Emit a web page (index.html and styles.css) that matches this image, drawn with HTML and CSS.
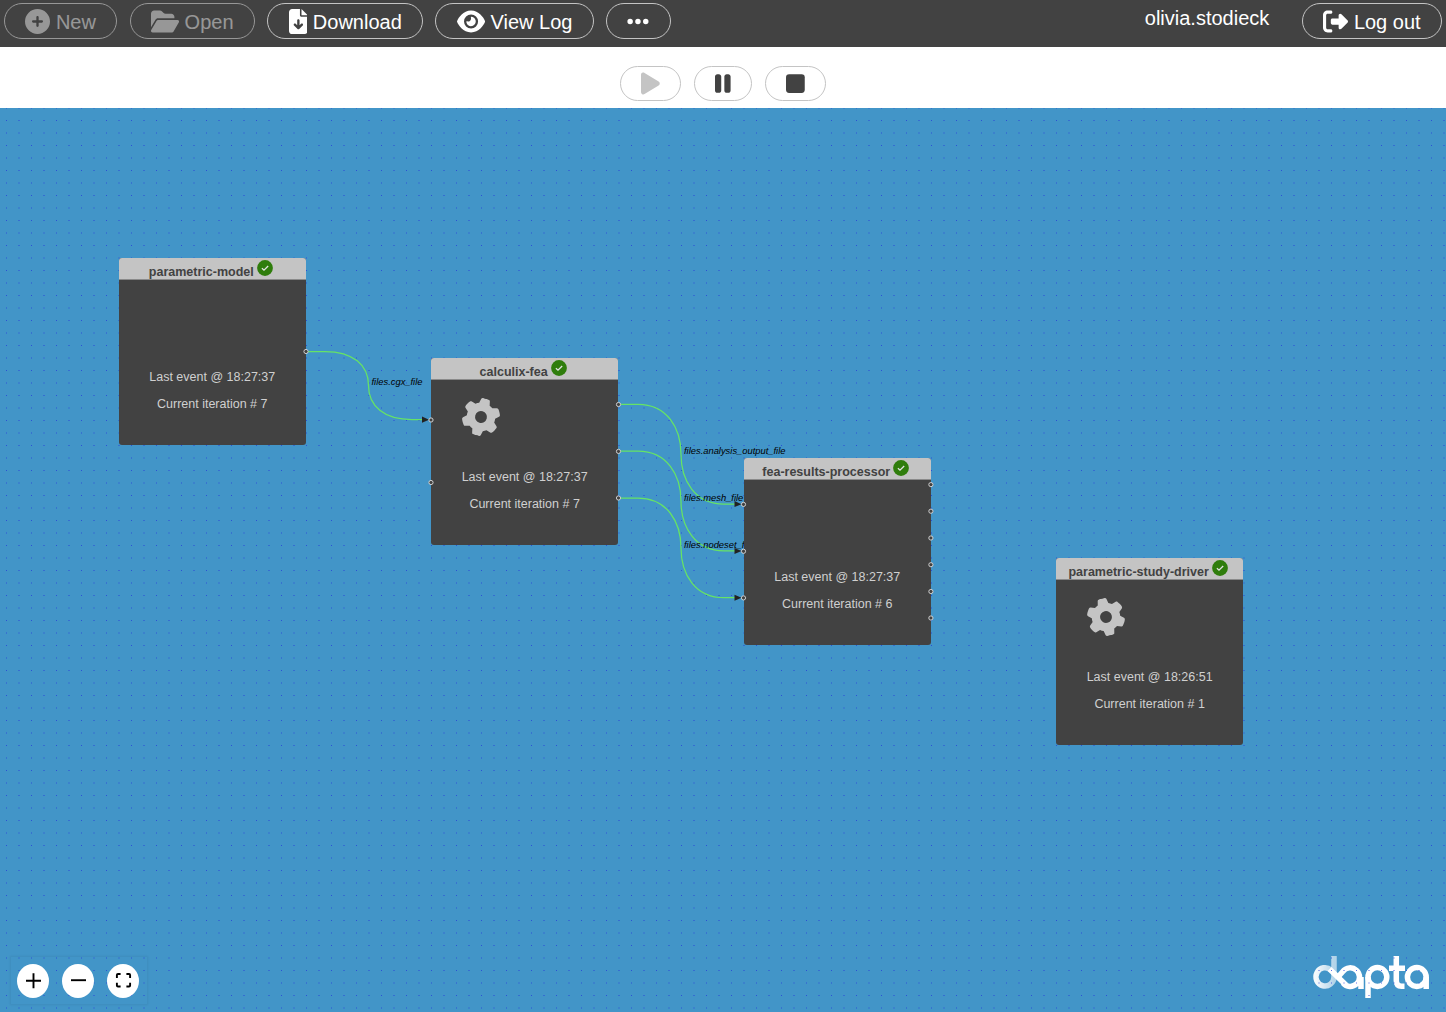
FILE: index.html
```html
<!DOCTYPE html>
<html lang="en">
<head>
<meta charset="utf-8">
<title>dapta</title>
<link rel="stylesheet" href="styles.css">
</head>
<body>
<svg class="defs" width="0" height="0" aria-hidden="true">
  <symbol id="gear" viewBox="0 0 512 512"><path d="M495.9 166.6c3.2 8.7 .5 18.4-6.4 24.6l-43.3 39.4c1.1 8.3 1.7 16.8 1.7 25.4s-.6 17.1-1.7 25.4l43.3 39.4c6.9 6.2 9.6 15.9 6.4 24.6c-4.4 11.9-9.7 23.3-15.8 34.3l-4.7 8.1c-6.6 11-14 21.4-22.1 31.2c-5.9 7.2-15.7 9.6-24.5 6.8l-55.7-17.7c-13.4 10.3-28.2 18.9-44 25.4l-12.5 57.1c-2 9.1-9 16.3-18.2 17.8c-13.8 2.3-28 3.5-42.5 3.5s-28.7-1.2-42.5-3.5c-9.2-1.5-16.2-8.7-18.2-17.8l-12.5-57.1c-15.8-6.5-30.6-15.1-44-25.4L83.1 425.9c-8.8 2.8-18.6 .3-24.5-6.8c-8.1-9.8-15.5-20.2-22.1-31.2l-4.7-8.1c-6.1-11-11.4-22.4-15.8-34.3c-3.2-8.7-.5-18.4 6.4-24.6l43.3-39.4C64.6 273.1 64 264.6 64 256s.6-17.1 1.7-25.4L22.4 191.2c-6.9-6.2-9.6-15.9-6.4-24.6c4.4-11.9 9.7-23.3 15.8-34.3l4.7-8.1c6.6-11 14-21.4 22.1-31.2c5.9-7.2 15.7-9.6 24.5-6.8l55.7 17.7c13.4-10.3 28.2-18.9 44-25.4l12.5-57.1c2-9.1 9-16.3 18.2-17.8C227.3 1.2 241.5 0 256 0s28.7 1.2 42.5 3.5c9.2 1.5 16.2 8.7 18.2 17.8l12.5 57.1c15.8 6.5 30.6 15.1 44 25.4l55.7-17.7c8.8-2.8 18.6-.3 24.5 6.8c8.1 9.8 15.5 20.2 22.1 31.2l4.7 8.1c6.1 11 11.4 22.4 15.8 34.3zM256 336a80 80 0 1 0 0-160 80 80 0 1 0 0 160z"/></symbol>
  <symbol id="check" viewBox="0 0 16 16"><circle cx="8" cy="8" r="7.9" fill="#2f7d0c"/><path d="M4.900 8.200l2.100 2 4.200-4.200" fill="none" stroke="#e4e4e4" stroke-width="1.300"/></symbol>
</svg>

<header class="topbar">
  <button class="btn disabled"><svg class="icon" viewBox="0 0 512 512"><path d="M256 512a256 256 0 1 0 0-512 256 256 0 1 0 0 512zM232 344v-64h-64c-13.3 0-24-10.7-24-24s10.7-24 24-24h64v-64c0-13.3 10.7-24 24-24s24 10.7 24 24v64h64c13.3 0 24 10.7 24 24s-10.7 24-24 24h-64v64c0 13.3-10.7 24-24 24s-24-10.7-24-24z"/></svg><span>New</span></button>
  <button class="btn disabled"><svg class="icon wide" viewBox="0 0 576 512"><path d="M88.700 223.800L0 375.800V96c0-35.300 28.700-64 64-64h117.500c17 0 33.300 6.700 45.300 18.700l26.500 26.500c12 12 28.300 18.700 45.300 18.700H416c35.300 0 64 28.700 64 64v32H144c-22.800 0-43.800 12.100-55.300 31.800zm27.600 16.100C122.100 230 132.600 224 144 224h400c11.500 0 22 6.100 27.700 16.100s5.700 22.200-.1 32.100l-112 192C453.900 474 443.400 480 432 480H32c-11.500 0-22-6.100-27.700-16.100s-5.700-22.200 .1-32.100l112-192z"/></svg><span>Open</span></button>
  <button class="btn"><svg class="icon narrow" viewBox="0 0 384 512"><path d="M64 0C28.700 0 0 28.700 0 64v384c0 35.300 28.700 64 64 64h256c35.300 0 64-28.700 64-64V160H256c-17.700 0-32-14.300-32-32V0H64zm192 0v128h128L256 0zm-40 232v102.100l31-31c9.400-9.400 24.600-9.400 33.900 0s9.400 24.600 0 33.900l-72 72c-9.400 9.400-24.600 9.400-33.900 0l-72-72c-9.400-9.400-9.400-24.600 0-33.900s24.600-9.400 33.900 0l31 31V232c0-13.300 10.700-24 24-24s24 10.700 24 24z"/></svg><span>Download</span></button>
  <button class="btn"><svg class="icon wide" viewBox="0 0 576 512"><path d="M288 32c-80.800 0-145.500 36.800-192.600 80.600C48.600 156 17.300 208 2.500 243.700c-3.300 7.900-3.300 16.700 0 24.600C17.300 304 48.600 356 95.400 399.400C142.500 443.200 207.200 480 288 480s145.500-36.800 192.600-80.600c46.800-43.500 78.100-95.400 93-131.100c3.300-7.900 3.300-16.700 0-24.600c-14.900-35.700-46.200-87.700-93-131.100C433.500 68.800 368.800 32 288 32zM144 256a144 144 0 1 1 288 0 144 144 0 1 1-288 0zm144-64c0 35.300-28.700 64-64 64c-7.100 0-13.900-1.200-20.300-3.300c-5.500-1.800-11.900 1.600-11.700 7.400c.3 6.900 1.300 13.800 3.200 20.700c13.700 51.200 66.400 81.600 117.600 67.900s81.600-66.400 67.900-117.600c-11.100-41.500-47.800-69.400-88.600-71.100c-5.800-.2-9.200 6.100-7.400 11.700c2.100 6.400 3.300 13.200 3.300 20.300z"/></svg><span>View Log</span></button>
  <button class="btn"><svg class="icon dots" viewBox="0 0 448 512"><path d="M8 256a56 56 0 1 1 112 0 56 56 0 1 1-112 0zm160 0a56 56 0 1 1 112 0 56 56 0 1 1-112 0zm216-56a56 56 0 1 1 0 112 56 56 0 1 1 0-112z"/></svg></button>
  <span class="user">olivia.stodieck</span>
  <button class="btn"><svg class="icon" viewBox="0 0 512 512"><path d="M377.900 105.900L500.700 228.700c7.200 7.200 11.300 17.100 11.300 27.300s-4.100 20.100-11.300 27.300L377.900 406.100c-6.400 6.400-15 9.900-24 9.900c-18.700 0-33.900-15.200-33.900-33.900V320H192c-17.700 0-32-14.300-32-32v-64c0-17.700 14.300-32 32-32h128v-62.100c0-18.700 15.200-33.900 33.900-33.900c9 0 17.600 3.600 24 9.900zM160 96H96c-17.700 0-32 14.300-32 32v256c0 17.700 14.300 32 32 32h64c17.700 0 32 14.300 32 32s-14.300 32-32 32H96c-53 0-96-43-96-96V128C0 75 43 32 96 32h64c17.700 0 32 14.300 32 32s-14.300 32-32 32z"/></svg><span>Log out</span></button>
</header>

<nav class="runbar">
  <button class="run idle"><svg class="icon narrow" viewBox="0 0 384 512"><path d="M73 39c-14.800-9.100-33.400-9.400-48.500-.9S0 62.600 0 80v352c0 17.400 9.400 33.400 24.500 41.900s33.700 8.100 48.500-.9l288-176c14.300-8.700 23-24.200 23-41s-8.700-32.200-23-41L73 39z"/></svg></button>
  <button class="run"><svg class="icon slim" viewBox="0 0 320 512"><path d="M48 64C21.500 64 0 85.500 0 112v288c0 26.500 21.500 48 48 48h32c26.500 0 48-21.500 48-48V112c0-26.500-21.500-48-48-48H48zm192 0c-26.500 0-48 21.500-48 48v288c0 26.500 21.500 48 48 48h32c26.500 0 48-21.500 48-48V112c0-26.500-21.500-48-48-48h-32z"/></svg></button>
  <button class="run"><svg class="icon narrow" viewBox="0 0 384 512"><rect y="64" width="384" height="384" rx="64"/></svg></button>
</nav>

<main class="canvas">
  <svg class="logo" viewBox="1310 950 124 52" aria-label="dapta">
    <defs><linearGradient id="fade" x1="0" x2="1" y1="0" y2="0"><stop offset="0" stop-color="#fff" stop-opacity=".95"/><stop offset="1" stop-color="#fff" stop-opacity=".6"/></linearGradient></defs>
    <g fill="none" stroke="#fff" stroke-width="5.500">
      <path stroke="url(#fade)" d="M1334 956V977A9 9.200 0 1 1 1331 970"/>
      <path d="M1329.500 969L1346 985"/>
      <path d="M1343 983A9.300 9.300 0 1 0 1342.800 971.500L1338 977M1361 977V989"/>
      <circle cx="1377.400" cy="977" r="9.400"/><path d="M1368 977V998"/>
      <path d="M1396.300 956V980.500Q1396.300 986.300 1401.500 986.300H1404.500M1389 968.300H1405"/>
      <circle cx="1416.800" cy="977" r="9.400"/><path d="M1426.200 977V989"/>
    </g>
  </svg>
  <svg class="grid" width="1446" height="904" shape-rendering="crispEdges">
    <defs><pattern id="dots" x="6" y="12" width="25" height="25" patternUnits="userSpaceOnUse">
      <g fill="#2337dc">
        <rect width="1" height="1" opacity=".72"/>
        <rect x="12" width="2" height="1" opacity=".42"/>
        <rect y="12" width="1" height="2" opacity=".36"/>
        <rect x="12" y="12" width="2" height="2" opacity=".2"/>
      </g>
    </pattern></defs>
    <rect width="1446" height="904" fill="url(#dots)"/>
  </svg>
  <svg class="edges" viewBox="0 108 1446 904" width="1446" height="904">
    <g class="wires">
      <path d="M308 351.500H325C353 351.500 368.500 365 368.500 385.500S384 419.500 412 419.500H424"/>
      <path d="M620 404.300H638C667 404.300 681 428 681 454.300S695 504 724 504H737"/>
      <path d="M620 451.100H638C667 451.100 681 475 681 501S695 550.800 724 550.800H737"/>
      <path d="M620 498H638C667 498 681 522 681 548S695 597.700 724 597.700H737"/>
    </g>
    <g class="tips"><path d="M422 416.500L429 419.700L422 422.700zM734.500 501L741.500 504.200L734.500 507zM734.500 547.900L741.500 551L734.500 554zM734.500 594.700L741.500 597.800L734.500 600.800z"/></g>
    <g class="labels">
      <text x="371.500" y="384.800">files.cgx_file</text>
      <text x="684" y="453.800">files.analysis_output_file</text>
      <text x="684" y="500.800">files.mesh_file</text>
      <text x="684" y="547.700">files.nodeset_file</text>
    </g>
  </svg>

  <section class="node model">
    <h2 class="title">parametric-model <svg class="ok"><use href="#check"/></svg></h2>
    <div class="gearbox"></div>
    <p>Last event @ 18:27:37</p><p>Current iteration # 7</p>
  </section>
  <section class="node fea">
    <h2 class="title">calculix-fea <svg class="ok"><use href="#check"/></svg></h2>
    <div class="gearbox"><svg class="gear"><use href="#gear"/></svg></div>
    <p>Last event @ 18:27:37</p><p>Current iteration # 7</p>
  </section>
  <section class="node results">
    <h2 class="title">fea-results-processor <svg class="ok"><use href="#check"/></svg></h2>
    <div class="gearbox"></div>
    <p>Last event @ 18:27:37</p><p>Current iteration # 6</p>
  </section>
  <section class="node driver">
    <h2 class="title">parametric-study-driver <svg class="ok"><use href="#check"/></svg></h2>
    <div class="gearbox"><svg class="gear back"><use href="#gear"/></svg></div>
    <p>Last event @ 18:26:51</p><p>Current iteration # 1</p>
  </section>

  <svg class="ports" viewBox="0 108 1446 904" width="1446" height="904">
    <circle cx="306" cy="351.500" r="2.100"/>
    <circle cx="431" cy="420" r="2.100"/><circle cx="431" cy="482.500" r="2.100"/>
    <circle cx="618.500" cy="404.500" r="2.100"/><circle cx="618.500" cy="451.400" r="2.100"/><circle cx="618.500" cy="498" r="2.100"/>
    <circle cx="743.500" cy="504.400" r="2.100"/><circle cx="743.500" cy="551.300" r="2.100"/><circle cx="743.500" cy="597.900" r="2.100"/>
    <circle cx="930.900" cy="484.600" r="2.100"/><circle cx="930.900" cy="511.200" r="2.100"/><circle cx="930.900" cy="538" r="2.100"/><circle cx="930.900" cy="564.700" r="2.100"/><circle cx="930.900" cy="591.500" r="2.100"/><circle cx="930.900" cy="618" r="2.100"/>
  </svg>

  <div class="controls">
    <button class="ctl"><svg viewBox="0 0 32 34"><path d="M16.500 9.200V24.200M9 16.700H24"/></svg></button>
    <button class="ctl"><svg viewBox="0 0 32 34"><path d="M9 16.200H24"/></svg></button>
    <button class="ctl"><svg viewBox="0 0 32 34"><path d="M9.900 14V11Q9.900 10 11 10H13.600M19.400 10H22.100Q23.100 10 23.100 11V14M23.100 18.800V21.500Q23.100 22.500 22.100 22.500H19.400M13.600 22.500H11Q9.900 22.500 9.900 21.500V18.800"/></svg></button>
  </div>
</main>
</body>
</html>
```
FILE: styles.css
```css
* { box-sizing: border-box; }
body {
  margin: 0;
  height: 1012px;
  display: flex;
  flex-direction: column;
  overflow: hidden;
  font-family: "Liberation Sans", Arial, sans-serif;
  background: #fff;
}
button { font: inherit; cursor: pointer; }
.defs { position: absolute; }

.topbar {
  flex: none;
  height: 47px;
  display: flex;
  align-items: flex-start;
  gap: 12.3px;
  padding: 3px 4px 0;
  background: #424242;
  color: #fff;
  font-size: 20px;
}
.btn {
  height: 36px;
  display: flex;
  align-items: center;
  gap: 5.5px;
  padding: 1px 20.4px 0;
  border: 1px solid #c4c4c4;
  border-radius: 18px;
  background: transparent;
  color: #fff;
  white-space: nowrap;
}
.btn span { padding-top: 2px; }
.btn.disabled { opacity: .45; border-color: #fff; }
.icon { width: 25px; height: 25px; flex: none; fill: currentColor; }
.icon.wide { width: 28.1px; }
.icon.narrow { width: 18.75px; }
.icon.dots { width: 21.9px; }
.icon.slim { width: 15.6px; }
.user { margin-left: auto; margin-right: 20.4px; line-height: 30px; }

.runbar {
  flex: none;
  height: 61px;
  display: flex;
  justify-content: center;
  gap: 13px;
  padding-top: 19px;
}
.run {
  height: 35px;
  display: flex;
  align-items: center;
  padding: 0 20px;
  border: 1px solid #c4c4c4;
  border-radius: 17.5px;
  background: #fff;
  color: #424242;
}
.run.idle { color: #c4c4c4; }

.canvas { position: relative; flex: 1; background: #4295c8; overflow: hidden; }
.grid, .edges, .ports { position: absolute; left: 0; top: 0; }
.ports { pointer-events: none; fill: #424242; stroke: #d0d0d0; stroke-width: 1; }
.wires { fill: none; stroke: #66e366; stroke-width: 1.25; }
.tips { fill: #222; }
.labels { font-size: 9.375px; font-style: italic; fill: #000; }

.node {
  position: absolute;
  width: 187.5px;
  height: 187px;
  border-radius: 3px;
  background: #424242;
  color: #d0d0d0;
  font-size: 12.5px;
  text-align: center;
  overflow: hidden;
}
.model { left: 118.5px; top: 150px; }
.fea { left: 430.9px; top: 250px; }
.results { left: 743.5px; top: 350px; }
.driver { left: 1055.9px; top: 450px; }
.title {
  height: 22px;
  margin: 0;
  padding: 2px 3px 0 0;
  display: flex;
  justify-content: center;
  gap: 3px;
  border-bottom: 1px solid #8a8a8a;
  background: #c4c4c4;
  color: #424242;
  font-size: 12.5px;
  line-height: 24px;
}
.ok { width: 16px; height: 16px; margin-top: .4px; }
.gearbox { height: 84px; padding: 17.5px 0 0 31px; text-align: left; }
.gear { display: block; width: 38px; height: 38px; fill: #c4c4c4; transform: rotate(15deg); }
.gear.back { transform: rotate(-13deg); }
.node p { margin: 0; height: 27px; line-height: 27px; }

.logo { position: absolute; right: 12px; bottom: 10px; width: 124px; height: 52px; }
.controls {
  position: absolute;
  left: 11px;
  bottom: 8px;
  display: flex;
  gap: 13px;
  padding: 7px 8px 6px 6px;
  box-shadow: 0 0 2px 1px rgba(0, 0, 0, .06);
}
.ctl { width: 32px; height: 34px; padding: 0; border: 0; border-radius: 50%; background: #fff; }
.ctl svg { display: block; width: 32px; height: 34px; fill: none; stroke: #000; stroke-width: 1.9; }
```
